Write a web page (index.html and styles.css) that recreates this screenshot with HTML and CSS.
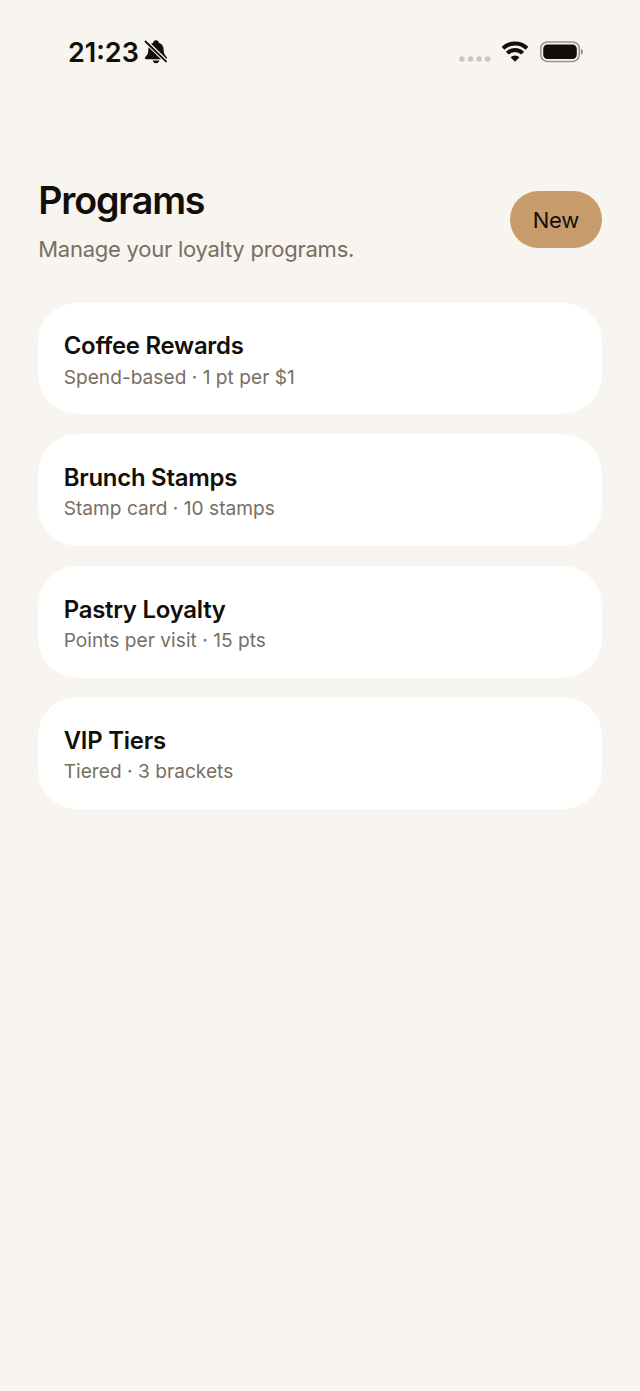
FILE: index.html
```html
<!DOCTYPE html>
<html lang="en">
<head>
<meta charset="utf-8">
<title>Programs</title>
<link rel="stylesheet" href="styles.css">
</head>
<body>
<div class="status">
  <div class="status-left">
    <span class="time">21:23</span>
    <svg class="bell" width="24" height="26" viewBox="0 0 24 26">
      <path d="M2.300 20.300c-.9 0-1.400-.5-1.400-1.200 0-1.200 3.200-3.500 3.300-6.600C4.300 8.500 5 5.200 9 4c.3-1.700 1.400-2.700 3-2.700S14.700 2.300 15 4c4 1.200 4.700 4.500 4.800 8.500.1 3.100 3.300 5.400 3.300 6.600 0 .7-.5 1.200-1.400 1.200z"/>
      <path d="M8.700 21.600h6.600c-.2 1.600-1.600 2.700-3.300 2.700s-3.100-1.100-3.300-2.700z"/>
      <path class="cut" d="M1.300 2.100l22 21.300"/>
      <path class="slash" d="M1.500 2.500l20.500 19.900"/>
    </svg>
  </div>
  <div class="status-right">
    <svg class="dots" width="32" height="6" viewBox="0 0 32 6"><circle cx="3" cy="3" r="2.800"/><circle cx="11.600" cy="3" r="2.800"/><circle cx="20.100" cy="3" r="2.800"/><circle cx="28.600" cy="3" r="2.800"/></svg>
    <svg class="wifi" width="28" height="21" viewBox="0 0 28 21">
      <path class="arc" d="M2 7.300a17.200 17.200 0 0 1 24 0M6.300 12.200a10.800 10.800 0 0 1 15.400 0"/>
      <path d="M14 20.700l-4.500-4.400a6.400 6.400 0 0 1 9 0z"/>
    </svg>
    <svg class="battery" width="44" height="22" viewBox="0 0 44 22">
      <rect class="shell" x=".8" y="1" width="38.400" height="19.400" rx="6.500"/>
      <rect x="3.200" y="3.400" width="33.600" height="14.600" rx="4.300"/>
      <path class="tip" d="M40.800 7.700c1.400.6 2.200 1.600 2.200 3s-.8 2.400-2.200 3z"/>
    </svg>
  </div>
</div>
<main class="page">
  <header class="header">
    <div>
      <h1 class="title">Programs</h1>
      <p class="subtitle">Manage your loyalty programs.</p>
    </div>
    <button class="new" type="button">New</button>
  </header>
  <section class="list">
    <article class="card"><h2 class="name">Coffee Rewards</h2><p class="detail">Spend-based · 1 pt per $1</p></article>
    <article class="card"><h2 class="name">Brunch Stamps</h2><p class="detail">Stamp card · 10 stamps</p></article>
    <article class="card"><h2 class="name">Pastry Loyalty</h2><p class="detail">Points per visit · 15 pts</p></article>
    <article class="card"><h2 class="name">VIP Tiers</h2><p class="detail">Tiered · 3 brackets</p></article>
  </section>
</main>
</body>
</html>
```
FILE: styles.css
```css
* { box-sizing: border-box; }
body {
  margin: 0;
  min-height: 1391px;
  background: #f8f4ef;
  color: #120f0a;
  font-family: Inter, "Liberation Sans", sans-serif;
}
h1, h2, p { margin: 0; }
svg { display: block; }
.status {
  height: 102px;
  padding: 0 56px 0 68px;
  display: flex;
  justify-content: space-between;
}
.status-left, .status-right { display: flex; align-items: flex-start; }
.status svg { fill: #120f0a; }
.time {
  width: 75.500px;
  padding-top: 36px;
  font-size: 27px;
  line-height: 34px;
  font-weight: 600;
  letter-spacing: 0;
}
.bell { margin-top: 39px; }
.bell .cut { stroke: #f8f4ef; stroke-width: 4.200; }
.bell .slash { stroke: #120f0a; stroke-width: 1.900; stroke-linecap: round; }
.status .dots { margin-top: 55.500px; fill: #cac6c1; }
.wifi { margin: 41px 0 0 10px; }
.status .wifi .arc { fill: none; stroke: #120f0a; stroke-width: 4; }
.battery { margin: 41px 0 0 11px; }
.status .battery .shell { fill: none; stroke: #98938c; stroke-width: 1.500; }
.status .tip { fill: #98938c; }
.page { padding: 76px 38.2px 0; }
.header { display: flex; justify-content: space-between; }
.title {
  font-size: 37.600px;
  line-height: 46px;
  font-weight: 600;
  letter-spacing: -1.150px;
}
.subtitle {
  margin-top: 10.600px;
  color: #786e62;
  font-size: 22px;
  line-height: 28px;
  letter-spacing: -0.250px;
}
.new {
  width: 92px;
  height: 57px;
  margin-top: 13px;
  padding: 0;
  border: 0;
  border-radius: 28.500px;
  background: #c89b6d;
  color: #120f0a;
  font: 400 22px/28px Inter, "Liberation Sans", sans-serif;
  letter-spacing: -0.300px;
}
.list {
  margin-top: 40.100px;
  display: flex;
  flex-direction: column;
  gap: 19.900px;
}
.card {
  height: 111.700px;
  padding: 28.800px 25.500px;
  border-radius: 39px;
  background: #fff;
}
.name { font-size: 23.900px; line-height: 30px; font-weight: 600; letter-spacing: -0.230px; }
.detail { margin-top: 3.200px; color: #786e62; font-size: 19.100px; line-height: 24px; letter-spacing: 0.030px; }
```
